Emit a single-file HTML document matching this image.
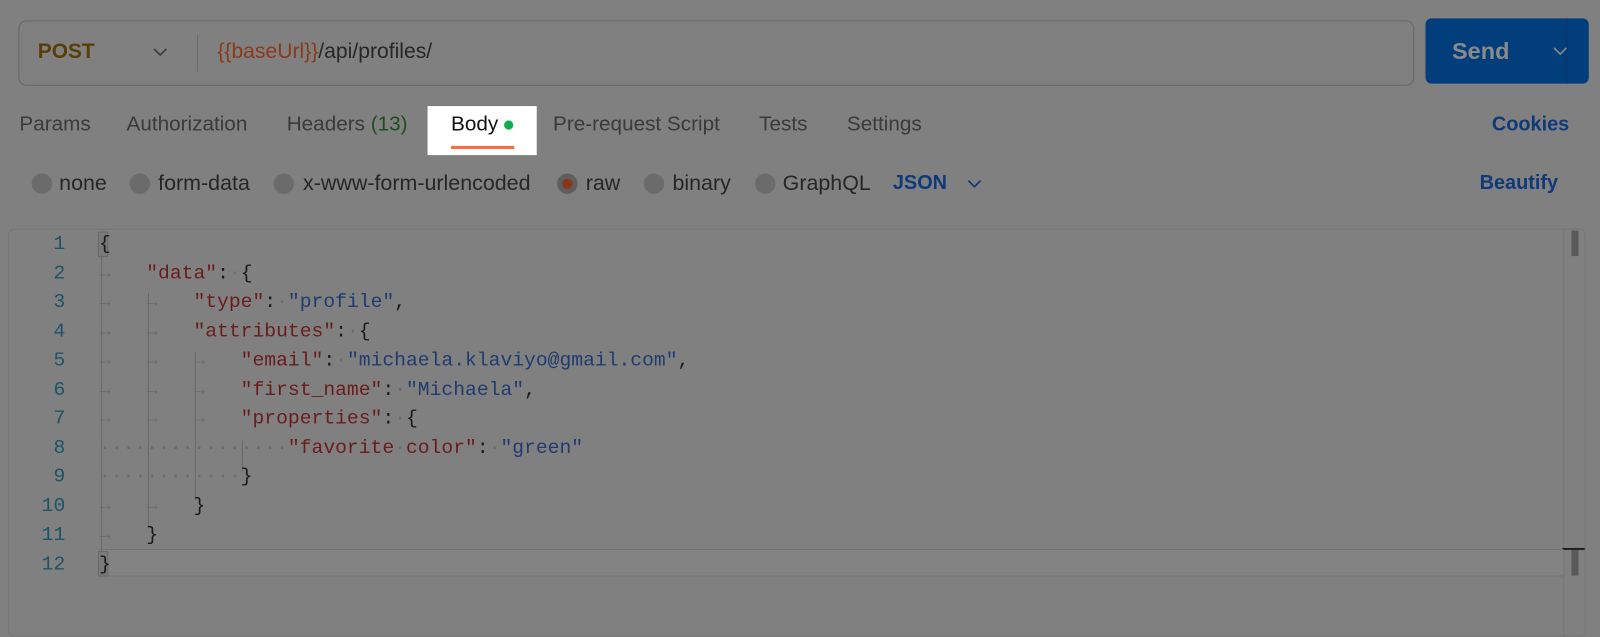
<!DOCTYPE html>
<html><head><meta charset="utf-8"><style>
*{margin:0;padding:0;box-sizing:border-box}
body{width:1600px;height:609px;background:#808080;position:relative;overflow:hidden;font-family:"Liberation Sans",sans-serif}
#w{position:absolute;left:0;top:0;width:1600px;height:609px;transform:scale(1.0204);transform-origin:0 0}
.a{position:absolute;white-space:nowrap}
.tab{font-size:20.3px;color:#3a3a3a;top:111px}
.rad{position:absolute;top:170px;width:20px;height:20px;border-radius:50%;background:#6b6b6b}
.rl{font-size:21px;color:#262626;top:168px}
.code{font-family:"Liberation Mono",monospace;font-size:19.3px;line-height:28.5px;color:#1a1a1a;white-space:pre}
.n{position:absolute;left:30px;width:34px;text-align:right;color:#1c5466}
.ln{position:absolute;left:97px}
.k{color:#6a1c1c}.s{color:#1f3b70}.t{color:#6c6c6c}.d{color:#6c6c6c}
.g{position:absolute;width:1px;background:#6a6a6a}
</style></head><body><div id="w">
<div class="a" style="left:18px;top:20px;width:1368px;height:64px;border:1.5px solid #666;border-radius:8px"></div>
<div class="a" style="left:37px;top:39px;font-size:20.5px;font-weight:bold;color:#5a3e0a">POST</div>
<svg class="a" style="left:150px;top:46px" width="14" height="10"><path d="M1 2 L7 8 L13 2" stroke="#3a3a3a" stroke-width="1.6" fill="none"/></svg>
<div class="a" style="left:193px;top:34px;width:1px;height:36px;background:#6e6e6e"></div>
<div class="a" style="left:213px;top:39px;font-size:20.7px;color:#262626"><span style="color:#8a3a1a">{{baseUrl}}</span>/api/profiles/</div>
<div class="a" style="left:1397px;top:18px;width:160px;height:64px;background:#023e7c;border-radius:6px"></div>
<div class="a" style="left:1535px;top:18px;width:1px;height:64px;background:#0a3468"></div>
<div class="a" style="left:1423px;top:37px;font-size:23px;font-weight:bold;color:#8a8a8a">Send</div>
<svg class="a" style="left:1522px;top:45px" width="14" height="10"><path d="M1 2 L7 8 L13 2" stroke="#8a8a8a" stroke-width="1.6" fill="none"/></svg>

<div class="a tab" style="left:19px">Params</div>
<div class="a tab" style="left:124px">Authorization</div>
<div class="a tab" style="left:281px">Headers <span style="color:#1c4f1c">(13)</span></div>
<div class="a" style="left:419px;top:104px;width:107px;height:48px;background:#fff"></div>
<div class="a" style="left:442px;top:111px;font-size:20.3px;color:#111">Body</div>
<div class="a" style="left:494px;top:118px;width:9px;height:9px;border-radius:50%;background:#0cb04a"></div>
<div class="a" style="left:442px;top:143px;width:62px;height:3px;background:#ff6c37"></div>
<div class="a tab" style="left:542px">Pre-request Script</div>
<div class="a tab" style="left:744px">Tests</div>
<div class="a tab" style="left:830px">Settings</div>
<div class="a" style="left:1462px;top:111px;font-size:19.5px;font-weight:bold;color:#0e3a7a">Cookies</div>

<div class="rad" style="left:31px"></div><div class="a rl" style="left:58px">none</div>
<div class="rad" style="left:127px"></div><div class="a rl" style="left:155px">form-data</div>
<div class="rad" style="left:268px"></div><div class="a rl" style="left:297px">x-www-form-urlencoded</div>
<div class="rad" style="left:546px;background:#5e5e5e"></div><div class="a" style="left:551px;top:175px;width:10px;height:10px;border-radius:50%;background:#8a3618"></div><div class="a rl" style="left:574px">raw</div>
<div class="rad" style="left:631px"></div><div class="a rl" style="left:659px">binary</div>
<div class="rad" style="left:740px"></div><div class="a rl" style="left:767px">GraphQL</div>
<div class="a" style="left:875px;top:168px;font-size:19.5px;font-weight:bold;color:#0e3a7a">JSON</div>
<svg class="a" style="left:948px;top:175px" width="14" height="10"><path d="M1 2 L7 8 L13 2" stroke="#0e3a7a" stroke-width="1.6" fill="none"/></svg>
<div class="a" style="left:1450px;top:168px;font-size:19.5px;font-weight:bold;color:#0e3a7a">Beautify</div>

<div class="a" style="left:8px;top:224px;width:1546px;height:400px;border:1px solid #747474;border-radius:6px"></div>
<div class="a" style="left:1532px;top:224px;width:1px;height:400px;background:#747474"></div>
<div class="a" style="left:1540px;top:226px;width:7px;height:25px;background:#5a5a5a"></div>
<div class="a" style="left:1540px;top:538px;width:7px;height:26px;background:#5a5a5a"></div>
<div class="a" style="left:1531px;top:537px;width:22px;height:2px;background:#222"></div>
<div class="a" style="left:97px;top:538px;width:1435px;height:27px;border-top:1px solid #747474;border-bottom:1px solid #747474;background:#838383"></div>
<div class="a" style="left:96px;top:227px;width:10px;height:25px;border:1px solid #6a6a6a;background:#7a7a7a"></div>
<div class="a" style="left:96px;top:540px;width:10px;height:25px;border:1px solid #6a6a6a;background:#7a7a7a"></div>
<div class="g" style="left:99px;top:250px;height:290px"></div>
<div class="g" style="left:145px;top:287px;height:230px"></div>
<div class="g" style="left:191px;top:345px;height:145px"></div>
<div class="g" style="left:237px;top:432px;height:30px"></div>

<div class="a code" style="left:0;top:225px;width:1530px;height:340px">
<div class="n" style="top:0">1</div><div class="ln" style="top:0">{</div>
<div class="n" style="top:28.5px">2</div><div class="ln" style="top:28.5px"><span class="t">→   </span><span class="k">"data"</span>:<span class="d">·</span>{</div>
<div class="n" style="top:57px">3</div><div class="ln" style="top:57px"><span class="t">→   →   </span><span class="k">"type"</span>:<span class="d">·</span><span class="s">"profile"</span>,</div>
<div class="n" style="top:85.5px">4</div><div class="ln" style="top:85.5px"><span class="t">→   →   </span><span class="k">"attributes"</span>:<span class="d">·</span>{</div>
<div class="n" style="top:114px">5</div><div class="ln" style="top:114px"><span class="t">→   →   →   </span><span class="k">"email"</span>:<span class="d">·</span><span class="s">"michaela.klaviyo@gmail.com"</span>,</div>
<div class="n" style="top:142.5px">6</div><div class="ln" style="top:142.5px"><span class="t">→   →   →   </span><span class="k">"first_name"</span>:<span class="d">·</span><span class="s">"Michaela"</span>,</div>
<div class="n" style="top:171px">7</div><div class="ln" style="top:171px"><span class="t">→   →   →   </span><span class="k">"properties"</span>:<span class="d">·</span>{</div>
<div class="n" style="top:199.5px">8</div><div class="ln" style="top:199.5px"><span class="d">················</span><span class="k">"favorite<span class="d">·</span>color"</span>:<span class="d">·</span><span class="s">"green"</span></div>
<div class="n" style="top:228px">9</div><div class="ln" style="top:228px"><span class="d">············</span>}</div>
<div class="n" style="top:256.5px">10</div><div class="ln" style="top:256.5px"><span class="t">→   →   </span>}</div>
<div class="n" style="top:285px">11</div><div class="ln" style="top:285px"><span class="t">→   </span>}</div>
<div class="n" style="top:313.5px">12</div><div class="ln" style="top:313.5px">}</div>
</div>
</div></body></html>
